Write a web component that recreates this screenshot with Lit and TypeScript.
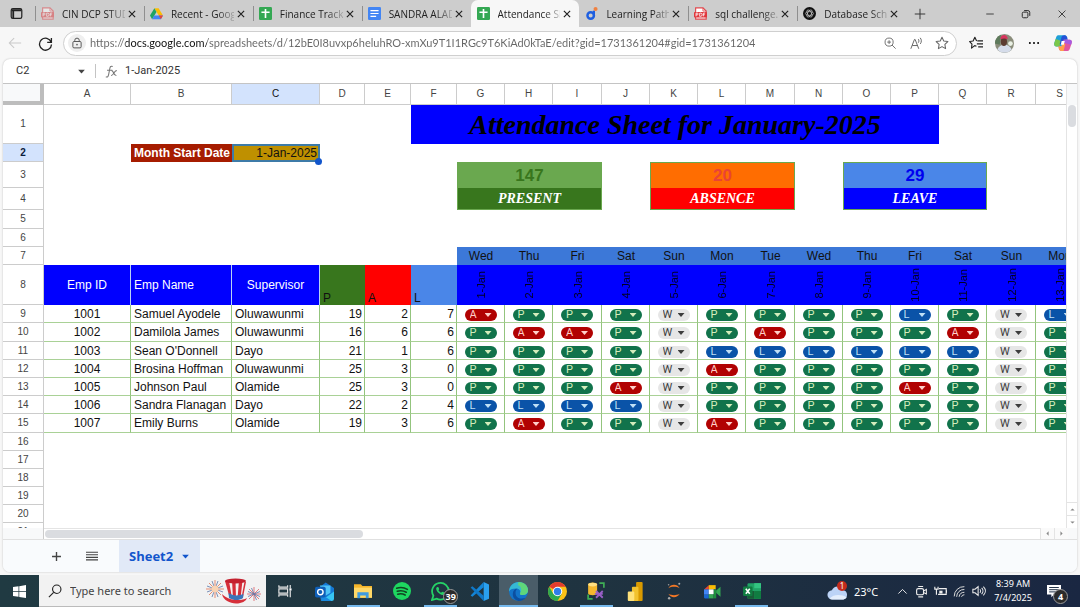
import { LitElement, html, svg, css, nothing, TemplateResult } from "lit";
import { customElement, property } from "lit/decorators.js";
import { classMap } from "lit/directives/class-map.js";

const pdf = svg`<path d="M2 1h9l4 4v10H2z" fill="#fff" stroke="#e0474c" stroke-width="1.4"/><path d="M11 1v4h4" fill="none" stroke="#e0474c"/><rect x="0" y="6" width="16" height="7" rx="1" fill="#e0373c"/><path d="M2.500 11.500v-4h1.500a1 1 0 0 1 0 2.200H2.500M7 7.500v4h1a1.800 1.800 0 0 0 0-4zM11.500 11.500v-4h2.200M11.500 9.500h1.800" fill="none" stroke="#fff" stroke-width="1"/>`;
const sheets = svg`<rect x="0" y="0" width="16" height="16" rx="1.500" fill="#34a853"/><path d="M8 2.500v11M3 6.500h10" stroke="#fff" stroke-width="2"/>`;

const ICONS: Record<string, TemplateResult> = {
  panes: svg`<rect x="1.500" y="2" width="13" height="12" rx="2" fill="none" stroke="#222" stroke-width="1.500"/><path d="M2 4h12M4 4v9.500" stroke="#222" stroke-width="2.200"/>`,
  pdf,
  drive: svg`<path d="M5.400 1.500h5.200L16 10.500h-5.200z" fill="#fbbc04"/><path d="M5.400 1.500 0 10.500l2.600 4.500L8 6z" fill="#1fa463"/><path d="M5.200 10.500H16L13.400 15H2.600z" fill="#4285f4"/><path d="m16 10.500-2.600 4.500-2.600-4.500z" fill="#ea4335"/>`,
  sheets,
  docs: svg`<rect width="16" height="16" rx="1.500" fill="#4285f4"/><path d="M3 4.500h10M3 8h10M3 11.500h7" stroke="#fff" stroke-width="1.500"/>`,
  path: svg`<circle cx="7" cy="10.500" r="4" fill="none" stroke="#1f5fe0" stroke-width="3"/><path d="M11 4.500v7" stroke="#1f5fe0" stroke-width="2.600"/><circle cx="13" cy="2.500" r="2.500" fill="#f08040"/>`,
  gpt: svg`<circle cx="8" cy="8" r="8" fill="#111"/><g fill="none" stroke="#ccc" stroke-width=".8"><ellipse cx="8" cy="8" rx="5" ry="2.400"/><ellipse cx="8" cy="8" rx="5" ry="2.400" transform="rotate(60 8 8)"/><ellipse cx="8" cy="8" rx="5" ry="2.400" transform="rotate(120 8 8)"/></g>`,
  close: svg`<path d="M3 3l10 10M13 3 3 13" stroke="#222" stroke-width="1.900"/>`,
  plus: svg`<path d="M8 1v14M1 8h14" stroke="#333" stroke-width="1.300"/>`,
  min: svg`<path d="M2 8h12" stroke="#222" stroke-width="1.300"/>`,
  max: svg`<rect x="2" y="5" width="9" height="9" rx="2" fill="none" stroke="#222" stroke-width="1.500"/><path d="M5 2.500h6a3 3 0 0 1 3 3V11" fill="none" stroke="#222" stroke-width="1.500"/>`,
  winclose: svg`<path d="M2.500 2.500l11 11M13.500 2.500l-11 11" stroke="#222" stroke-width="1.300"/>`,
  back: svg`<path d="M15 8H1.500M7 2.500 1.500 8 7 13.500" fill="none" stroke="#c9c9c9" stroke-width="1.200"/>`,
  reload: svg`<path d="M14 6.500A6.400 6.400 0 1 0 14.400 9M14.300 2v4.700H9.800" fill="none" stroke="#222" stroke-width="1.400"/>`,
  lock: svg`<rect x="2.500" y="6" width="11" height="8.500" rx="1.500" fill="none" stroke="#555" stroke-width="1.300"/><path d="M5 6V4.500a3 3 0 0 1 6 0V6" fill="none" stroke="#555" stroke-width="1.300"/><circle cx="8" cy="10.200" r="1.100" fill="#555"/>`,
  zoom: svg`<circle cx="6.800" cy="6.800" r="5.400" fill="none" stroke="#666" stroke-width="1.200"/><path d="M10.700 10.700 15.500 15.500M4.300 6.800h5M6.800 4.300v5" stroke="#666" stroke-width="1.200"/>`,
  read: svg`<path d="M1 14.500 5.500 3h.8l4.500 11.500M2.700 10.500h6.400M10 2.500c1.200 1 1.200 3.200.2 4.500M12.500 1c1.900 2 1.900 5.300.2 7.500" fill="none" stroke="#666" stroke-width="1.200"/>`,
  star: svg`<path d="m8 1.500 2 4.300 4.700.6-3.400 3.300.8 4.700L8 12.100l-4.100 2.300.8-4.700L1.300 6.400 6 5.800z" fill="none" stroke="#666" stroke-width="1.200" stroke-linejoin="round"/>`,
  favs: svg`<path d="M8.500 11.800 6.500 11l-3.600 2.800.5-4.600L.8 6.300l3.900-.6 2-4.200 2 4.200" fill="none" stroke="#222" stroke-width="1.300" stroke-linejoin="round"/><path d="M9.500 5.500H16M9 9h7M10.500 12.500H16" stroke="#222" stroke-width="1.300"/>`,
  avatar: svg`<circle cx="8" cy="8" r="8" fill="#8a8d7b"/><path d="M0 8a8 8 0 0 1 5-7.400L4 9z" fill="#5e7a5c"/><path d="M2 13a6.500 6.500 0 0 1 12 0 8 8 0 0 1-12 0z" fill="#d5dcea"/><ellipse cx="7.500" cy="6.500" rx="2.600" ry="3.500" fill="#5b3b30"/><path d="M4.500 4.500C4.500-.5 11-.5 10.700 4.500 9 3.500 6.500 3.500 4.500 4.500z" fill="#d8345f"/><circle cx="13" cy="8" r="2" fill="#e9f0e4"/>`,
  dots: svg`<circle cx="2.500" cy="8" r="1.300"/><circle cx="8" cy="8" r="1.300"/><circle cx="13.500" cy="8" r="1.300"/>`,
  copilot: svg`<path d="M4 1h5.500c1.300 0 1.800 1 2.200 2.200L9 9 5.500 11H2C.3 11-.1 9.500.3 8L2 2.700C2.400 1.500 3 1 4 1z" fill="#1fa0d8"/><path d="M.3 8 1.500 4.500 6 6l-1 5H2C.3 11-.1 9.500.3 8z" fill="#7cc84a"/><path d="M9.500 1c1.300 0 1.800 1 2.200 2.200l.6 1.800H9L8 9H5l1.600-6C7 1.600 7.600 1 9.500 1z" fill="#2451d8"/><path d="M12 15H6.500c-1.300 0-1.800-1-2.200-2.200L4 11h2.700L8.500 5H14c1.700 0 2.100 1.500 1.700 3L14 13.300c-.4 1.200-1 1.700-2 1.700z" fill="#e0559f"/><path d="M4 11h2.700l1-3.500L10 9l-1.500 6h-2c-1.300 0-1.800-1-2.200-2.200z" fill="#ffa14a"/><path d="M9 5h5c1.700 0 2.100 1.500 1.700 3l-.5 1.500L8 7.500z" fill="#a65be0"/><path d="M6.800 6.200h2.800L8.700 9.600H6z" fill="#fff"/>`,
  fx: svg`<path d="M1 14.500c2.500 1 3-.5 3.500-3L6 4c.4-2 1.300-3 3.500-2.300M2.500 6.500H9M8 7c2.500-.8 2.500 6.500 6 6M14.500 7c-3-1-4 6.500-7 5.800" fill="none" stroke="#777" stroke-width="1.300"/>`,
  caret: svg`<path d="M2 5h12l-6 6.500z" fill="#444"/>`,
  caretBlue: svg`<path d="M2 5h12l-6 6.500z" fill="#1155cc"/>`,
  add: svg`<path d="M8 1.500v13M1.500 8h13" stroke="#444" stroke-width="2"/>`,
  menu: svg`<path d="M0 3h16M0 6.400h16M0 9.800h16M0 13.200h16" stroke="#444" stroke-width="1.500"/>`,
  up: svg`<path d="M3 10.500h10L8 5.500z" fill="#888"/>`,
  down: svg`<path d="M3 5.500h10l-5 5z" fill="#888"/>`,
  left: svg`<path d="M10.500 3v10l-5-5z" fill="#888"/>`,
  right: svg`<path d="M5.500 3v10l5-5z" fill="#888"/>`,
  windows: svg`<path d="M0 2.500 6.800 1.500v6H0zM7.700 1.400 16 0v7.500H7.700zM0 8.400h6.800v6L0 13.500zM7.700 8.400H16V16l-8.300-1.300z" fill="#fff"/>`,
  search: svg`<circle cx="10" cy="6" r="4.800" fill="none" stroke="#222" stroke-width="1.300"/><path d="M6.500 9.500 1 15" stroke="#222" stroke-width="1.300"/>`,
  taskview: svg`<path d="M1 1.500v2h10v-2M1 14.500v-2h10v2M1 5.500h10v5H1zM14 1v4M14 7.500V15" fill="none" stroke="#e8e8e8" stroke-width="1.300"/><rect x="13" y="5" width="2.500" height="2.500" fill="#fff"/>`,
  outlook: svg`<path d="M3 5 9 .5 16 5v8.500a2 2 0 0 1-2 2H5z" fill="#1478d4"/><path d="M4 3h9v6l-5 3z" fill="#4fc3f7"/><path d="M16 5.500V14a2 2 0 0 1-2 2H5l11-8z" fill="#37c6f4"/><path d="M5 10l9 6H5.500z" fill="#1a8ae0"/><rect x="0" y="4" width="9" height="9" rx="1.500" fill="#0f5fb8"/><circle cx="4.500" cy="8.500" r="2.300" fill="none" stroke="#fff" stroke-width="1.200"/>`,
  folder: svg`<path d="M0 2h6l1.500 1.500H16V14H0z" fill="#f5b52a"/><path d="M0 5h16v9H0z" fill="#ffd867"/><path d="M3 9h10v5.500h-2.500V12h-5v2.500H3z" fill="#3f9be0"/>`,
  spotify: svg`<circle cx="8" cy="8" r="8" fill="#1ed760"/><path d="M3.300 5.500c3.200-1 6.800-.6 9.500 1M3.800 8.200c2.700-.8 5.600-.5 8 .9M4.200 10.800c2.200-.6 4.600-.4 6.600.8" fill="none" stroke="#142" stroke-width="1.400" stroke-linecap="round"/>`,
  whatsapp: svg`<path d="M.8 15.200 2 11.500A7 7 0 1 1 4.700 14z" fill="none" stroke="#25d366" stroke-width="1.500"/><path d="M5.300 4.300c1.200-.6 1.500 1.200 1.600 1.800-.9.900-.5 1.200.2 2s1.400 1.200 1.900.6 1-.6 1.500-.2 1.300.9.700 1.700c-1.200 1.500-3.400.5-5-1.100s-2.700-3.800-.9-4.800z" fill="#25d366"/>`,
  vscode: svg`<path d="M11.500 0 16 2v12l-4.500 2z" fill="#2aa0ee"/><path d="M11.500 0v4.500L2 12.500.5 11.300z" fill="#1485d6"/><path d="M11.500 16v-4.500L2 3.500.5 4.700z" fill="#0f78c8"/>`,
  edge: svg`<circle cx="8" cy="8" r="8" fill="#1374c9"/><path d="M0 7.500C.5 3 4 0 8 0c5 0 8 3.500 8 7 0 3-2.500 4-4.500 4S8.700 10 9.500 9C10 7.500 8.500 5.500 6 5.500S1 6 0 8z" fill="#36b8d4"/><path d="M8 0c5 0 8 3.500 8 7 0 3-2.500 4-4.500 4S8.700 10 9.500 9c1.500-2 1-5-2-6.500z" fill="#5fd67a"/><path d="M5.500 9c0 4 3.500 6 8.500 4.300A8 8 0 0 1 8 16C5 15.500 3 13 3.200 10S5 5.800 7 5.700C6 6.500 5.500 7.500 5.500 9z" fill="#0c4fa0"/>`,
  chrome: svg`<circle cx="8" cy="8" r="8" fill="#fbc116"/><path d="M8 8 1.100 4A8 8 0 0 1 14.900 4H8z" fill="#e33b2e"/><path d="M1.100 4A8 8 0 0 0 8 16l3.500-6L8 8 4.500 10z" fill="#2da94f"/><circle cx="8" cy="8" r="4" fill="#fff"/><circle cx="8" cy="8" r="3.100" fill="#2f7de9"/>`,
  ssms: svg`<path d="M1 2.200c0-2.400 8-2.400 8 0v8c0 2-8 2-8 0z" fill="#f5b82e"/><ellipse cx="5" cy="2.300" rx="4" ry="1.600" fill="#ffe083"/><path d="M11 1h4v4M1 11v4h4" fill="none" stroke="#3fae55" stroke-width="1.500"/><path d="m8 8 6 6M14 8l-6 6M7 10.500h7" stroke="#9a5fc8" stroke-width="1.600"/>`,
  powerbi: svg`<rect x="8.500" y="0" width="5.500" height="16" rx=".8" fill="#d99a00"/><rect x="5" y="4" width="5.500" height="12" rx=".8" fill="#f2c22e"/><rect x="1.500" y="8" width="5.500" height="8" rx=".8" fill="#ffe27a"/>`,
  jupyter: svg`<path d="M3 5.500c2-4 8-4 10 0-3-1.700-7-1.700-10 0zM3 10.500c2 4 8 4 10 0-3 1.700-7 1.700-10 0z" fill="#f37726"/><circle cx="12.700" cy="1.500" r=".9" fill="#aaa"/><circle cx="3.200" cy="2.500" r=".7" fill="#999"/><circle cx="3.700" cy="14.500" r="1.100" fill="#aaa"/>`,
  meet: svg`<path d="M0 6 4.500 2v4z" fill="#ea4335"/><path d="M4.500 2H11v4H4.500z" fill="#fbbc04"/><path d="M0 6h4.500v5H0z" fill="#4285f4"/><path d="M0 11h4.500v3.500H1.300A1.300 1.300 0 0 1 0 13z" fill="#1967d2"/><path d="M4.500 10.500H9v4H4.500z" fill="#34a853"/><path d="M9 6h2.500v8.500H9z" fill="#1e8e3e"/><path d="m11.500 7 4-3.500v9.500l-4-3.500z" fill="#34a853"/><rect x="4.500" y="6" width="4.500" height="4.500" fill="#fff"/>`,
  excel: svg`<rect x="4" y="1" width="12" height="14" rx="1" fill="#21a366"/><path d="M10 1h6v4.500h-6z" fill="#33c481"/><path d="M10 8h6v7h-6z" fill="#107c41"/><path d="M4 8h6v7H4z" fill="#185c37"/><rect x="0" y="4" width="8.500" height="8.500" rx="1" fill="#107c41"/><path d="m2.500 6 3.500 4.500M6 6l-3.500 4.500" stroke="#fff" stroke-width="1.400"/>`,
  cloud: svg`<path d="M4 14a3.500 3.500 0 0 1-.3-7A4.800 4.800 0 0 1 12.500 7 3.600 3.600 0 0 1 12.500 14z" fill="#bcd3f6"/><path d="M2 13.300C5 10 11 10 15 12.500a3.500 3.500 0 0 1-2.500 1.500H4a3.500 3.500 0 0 1-2-.7z" fill="#e4eefc"/>`,
  chevron: svg`<path d="m2 11 6-6 6 6" fill="none" stroke="#eee" stroke-width="1.400"/>`,
  meetnow: svg`<rect x="2" y="4.500" width="8.500" height="7.500" rx="2" fill="none" stroke="#eee" stroke-width="1.400"/><path d="M11 7l3-1.500V11l-3-1.500M4 1.800h6M4 14.600h6" fill="none" stroke="#eee" stroke-width="1.300"/>`,
  battery: svg`<path d="M6 4.500h9v7H5M15.500 6.500v3" fill="none" stroke="#eee" stroke-width="1.400"/><path d="M6.500 7h4v3.500h-4z" fill="#eee"/><path d="M1 2v3h4V2M3 5v7" fill="none" stroke="#eee" stroke-width="1.400"/>`,
  wifi: svg`<path d="M1.500 14A12 12 0 0 1 14 2M4.500 14.500A9 9 0 0 1 14 5.500M7.500 14.500A6.500 6.500 0 0 1 14 9M10.500 14.500A3.500 3.500 0 0 1 14 12" fill="none" stroke="#ddd" stroke-width="1.200"/>`,
  volume: svg`<path d="M1 6h2.500L7 3v10L3.500 10H1z" fill="none" stroke="#eee" stroke-width="1.200"/><path d="M9 6c1 1 1 3 0 4M11 4.500c2 2 2 5 0 7M13 3c3 3 3 7 0 10" fill="none" stroke="#eee" stroke-width="1.200"/>`,
  notes: svg`<path d="M0 1h16v11H8l-3 3v-3H0z" fill="#fff"/><path d="M2.500 4h11M2.500 6.500h11M2.500 9h8" stroke="#1b2c42" stroke-width="1.100"/>`,
};

const icon = (name: string, size: number) =>
  html`<svg width=${size} height=${size} viewBox="0 0 16 16" aria-hidden="true">${ICONS[name]}</svg>`;

/* ---------- Browser frame ---------- */

const TABS = [
  { icon: "pdf", title: "CIN DCP STUD", faded: true },
  { icon: "drive", title: "Recent - Goog" },
  { icon: "sheets", title: "Finance Tracke" },
  { icon: "docs", title: "SANDRA ALAD" },
  { icon: "sheets", title: "Attendance Sh", active: true },
  { icon: "path", title: "Learning Path", plain: true },
  { icon: "pdf", title: "sql challenge.p" },
  { icon: "gpt", title: "Database Sche" },
];

@customElement("browser-bar")
export class BrowserBar extends LitElement {
  static styles = css`
    :host { display: block; font-family: "Open Sans", sans-serif; color: #222; }
    svg { display: block; flex: none; }
    button { border: 0; padding: 0; background: none; display: grid; place-items: center; flex: none; }
    .strip { display: flex; align-items: center; height: 27px; background: #cdcdcd; }
    .panes { width: 32px; margin-right: 3px; }
    .tabs { display: flex; flex: 1; min-width: 0; height: 100%; }
    .tab { flex: 1 1 0; min-width: 0; display: flex; align-items: center; padding: 0 5px 0 6px; position: relative; }
    .tab::before { content: ""; position: absolute; left: 0; top: 6px; width: 1px; height: 15px; background: #8f8f8f; }
    .tab.active { background: #f7f7f7; border-radius: 7px 7px 0 0; }
    .tab.active::before, .tab.plain::before { display: none; }
    .title { flex: 1; min-width: 0; margin-left: 8px; font-size: 10px; line-height: 16px; white-space: nowrap; color: #222; text-decoration: none;
      mask-image: linear-gradient(to right, #000 74%, #0004 98%); }
    .faded > svg { opacity: 0.5; }
    .close { width: 14px; height: 18px; }
    .add { width: 28px; height: 27px; }
    .window { display: flex; margin-left: 38px; }
    .window button { width: 36px; height: 27px; }
    .toolbar { display: flex; align-items: center; height: 32px; padding-right: 3px; background: #f7f7f7; }
    .nav { width: 30px; height: 28px; }
    .address { flex: 1; min-width: 0; display: flex; align-items: center; height: 25px; margin: 0 4px 0 3px; padding: 0 1px 0 4px; box-sizing: border-box; background: #fff; border: 1px solid #cfcfcf; border-radius: 13px; }
    .lock { width: 18px; height: 18px; border-radius: 9px; background: #efefef; }
    .url { flex: 1; min-width: 0; height: 20px; margin-left: 4px; padding: 0; border: 0; outline: 0; font: 11px/20px Lato, "Open Sans", sans-serif; color: transparent; caret-color: #222;
      background: linear-gradient(to right, #666 36px, #111 36px 117px, #666 117px); background-clip: text; -webkit-background-clip: text; }
    .tool { width: 26px; height: 24px; }
    .wide { width: 29px; height: 28px; }
  `;
  render() {
    return html`
      <div class="strip">
        <button class="panes" aria-label="Tab actions">${icon("panes", 13)}</button>
        <nav class="tabs">
          ${TABS.map((t) => html`
            <div class=${classMap({ tab: true, active: !!t.active, plain: !!t.plain, faded: !!t.faded })}>
              ${icon(t.icon, 13)}
              <a class="title" href="#">${t.title}</a>
              <button class="close" aria-label="Close tab">${icon("close", 10)}</button>
            </div>`)}
        </nav>
        <button class="add" aria-label="New tab">${icon("plus", 12)}</button>
        <div class="window">
          <button aria-label="Minimize">${icon("min", 10)}</button>
          <button aria-label="Restore">${icon("max", 10)}</button>
          <button aria-label="Close">${icon("winclose", 10)}</button>
        </div>
      </div>
      <div class="toolbar">
        <button class="nav" aria-label="Back">${icon("back", 14)}</button>
        <button class="nav" aria-label="Reload">${icon("reload", 15)}</button>
        <div class="address">
          <button class="lock" aria-label="Site information">${icon("lock", 12)}</button>
          <input class="url" aria-label="Address" spellcheck="false"
            .value=${"https://docs.google.com/spreadsheets/d/12bE0I8uvxp6heluhRO-xmXu9T1I1RGc9T6KiAd0kTaE/edit?gid=1731361204#gid=1731361204"} />
          <button class="tool" aria-label="Zoom">${icon("zoom", 12)}</button>
          <button class="tool" aria-label="Read aloud">${icon("read", 13)}</button>
          <button class="tool" aria-label="Add to favorites">${icon("star", 14)}</button>
        </div>
        <button class="wide" aria-label="Favorites">${icon("favs", 14)}</button>
        <button class="wide" aria-label="Profile">${icon("avatar", 19)}</button>
        <button class="wide" aria-label="Settings">${icon("dots", 12)}</button>
        <button class="wide" aria-label="Copilot">${icon("copilot", 18)}</button>
      </div>`;
  }
}

/* ---------- Spreadsheet ---------- */

const COLUMNS = "ABCDEFGHIJKLMNOPQRS".split("");
const WIDTHS = [41, 87, 101, 88, 45, 46, 46, 48, 48, 49, 48, 48, 48, 49, 48, 48, 48, 48, 49, 48];
const DAYS = ["Wed", "Thu", "Fri", "Sat", "Sun", "Mon", "Tue", "Wed", "Thu", "Fri", "Sat", "Sun", "Mon"];
const STATES = ["P", "A", "L", "W"];
const STAFF: [number, string, string, number, number, number, string][] = [
  [1001, "Samuel Ayodele", "Oluwawunmi", 19, 2, 7, "APPPWPPPPLPWL"],
  [1002, "Damilola James", "Oluwawunmi", 16, 6, 6, "PAAPWPAPPPAWP"],
  [1003, "Sean O'Donnell", "Dayo", 21, 1, 6, "PPPPWLLLLLLWP"],
  [1004, "Brosina Hoffman", "Oluwawunmi", 25, 3, 0, "PPPPWAPPPPPWP"],
  [1005, "Johnson Paul", "Olamide", 25, 3, 0, "PPPAWPPPPAPWP"],
  [1006, "Sandra Flanagan", "Dayo", 22, 2, 4, "LLLLWPPPPPPWP"],
  [1007, "Emily Burns", "Olamide", 19, 3, 6, "PAPPWAPPPPPWP"],
];
const TALL_ROWS = [10, 15];

@customElement("status-chip")
export class StatusChip extends LitElement {
  @property() value = "P";
  static styles = css`
    :host { display: block; }
    .chip { display: grid; width: 32px; height: 12px; margin: 0 auto; border-radius: 6px; align-items: center; }
    .pick { grid-area: 1 / 1; appearance: none; width: 32px; height: 12px; border: 0; margin: 0; padding: 0 0 0 5px; background: none; color: inherit; font: 11px/12px Roboto, sans-serif; }
    .mark { grid-area: 1 / 1; justify-self: end; margin-right: 5px; width: 7px; height: 4px; background: currentColor; clip-path: polygon(0 0, 100% 0, 50% 100%); pointer-events: none; }
    .P { background: #11734b; color: #d4edbc; }
    .A { background: #b10202; color: #ffcfc9; }
    .L { background: #0a53a8; color: #bfe0f6; }
    .W { background: #e6e6e6; color: #3d3d3d; }
  `;
  render() {
    return html`<span class="chip ${this.value}">
      <select class="pick" aria-label="Status">
        ${STATES.map((s) => html`<option ?selected=${s === this.value}>${s}</option>`)}
      </select><span class="mark"></span></span>`;
  }
}

@customElement("sheet-view")
export class SheetView extends LitElement {
  static styles = css`
    :host { display: flex; flex-direction: column; min-height: 0; box-sizing: border-box; background: #fff; border-radius: 7px; overflow: hidden; font-family: "Liberation Sans", sans-serif; box-shadow: 0 0 2px #bbb; }
    svg { display: block; }
    button { border: 0; padding: 0; background: none; display: grid; place-items: center; }
    input { border: 0; outline: 0; padding: 0; background: none; color: #333; }
    .formula { display: flex; align-items: center; height: 24px; flex: none; border-bottom: 1px solid #c4c4c4; }
    .name { width: 52px; margin-left: 13px; font: 11px/20px Roboto, sans-serif; }
    .drop { width: 26px; height: 20px; }
    .rule { width: 1px; height: 14px; margin: 0 9px 0 1px; background: #c4c4c4; }
    .value { flex: 1; margin-left: 7px; font: 11px/20px Roboto, sans-serif; }
    .middle { flex: 1; min-height: 0; display: flex; }
    .viewport { flex: 1; min-width: 0; overflow: hidden; border-right: 1px solid #e4e4e4; }
    table { table-layout: fixed; width: 0; border-spacing: 0; font-size: 12px; line-height: 14px; color: #111; }
    tr { height: 18px; }
    .tall { height: 19px; }
    .cols { height: 21px; }
    .r1 { height: 39px; }
    .r3 { height: 26px; }
    .r4 { height: 22px; }
    .r5 { height: 19px; }
    .r8 { height: 40px; }
    td, th { box-sizing: border-box; padding: 0 3px; white-space: nowrap; overflow: hidden; }
    th { font-weight: 400; font-size: 10px; line-height: 12px; color: #444; border-right: 1px solid #ccc; border-bottom: 1px solid #ccc; padding: 0; }
    .corner { background: #f8f9fa; border-right: 4px solid #bdbdbd; border-bottom: 4px solid #bdbdbd; }
    .cols .sel { background: #d3e3fd; color: #111; }
    .r2 .sel { background: #d3e3fd; color: #0b1c3c; font-weight: 700; }
    .heading { background: #00f; color: #000; text-align: center; font: 700 italic 28px/36px "Liberation Serif", serif; }
    .start { background: #a61c00; color: #fff; font-weight: 700; }
    .date { background: #bf9000; text-align: right; padding: 0 1px; border: 2px solid #3d7ba8; position: relative; overflow: visible; }
    .date::after { content: ""; position: absolute; right: -4px; bottom: -5px; width: 7px; height: 7px; border-radius: 4px; background: #1155cc; }
    .count, .label { text-align: center; border: 1px solid #6aa84f; }
    .count { font-size: 17px; line-height: 20px; font-weight: 700; border-bottom: 0; }
    .label { color: #fff; font: 700 italic 14px/18px "Liberation Serif", serif; border-top: 0; }
    .c-present { background: #6aa84f; color: #38761d; }
    .l-present { background: #38761d; }
    .c-absent { background: #ff6d01; color: #ea4335; }
    .l-absent { background: #f00; }
    .c-leave { background: #4a86e8; color: #0000f0; }
    .l-leave { background: #00f; }
    .day { background: #3c78d8; text-align: center; }
    .head { background: #00f; color: #fff; text-align: center; border-right: 1px solid #b9d3f5; }
    .start-side { text-align: left; }
    .tot { vertical-align: bottom; text-align: left; }
    .t-p { background: #38761d; }
    .t-a { background: #f00; }
    .t-l { background: #4a86e8; }
    .when { background: #00f; padding: 0; font-size: 11px; color: #000024; }
    .turn { display: block; width: 14px; margin: 0 auto; text-align: center; writing-mode: vertical-rl; transform: rotate(180deg); }
    .data td { border-right: 1px solid #93c47d; border-bottom: 1px solid #a9d196; }
    .mid { text-align: center; }
    .num { text-align: right; padding: 0 2px; }
    .data .pickcell { padding: 4px 0 0; line-height: 0; vertical-align: top; }
    .vbar { width: 10px; flex: none; display: flex; flex-direction: column; box-sizing: border-box; background: #fff; }
    .vtrack { flex: 1; border-top: 21px solid #f8f9fa; }
    .vthumb { width: 8px; height: 22px; margin: 0 1px; border-radius: 4px; background: #dadce0; }
    .vbar button { height: 13px; border-top: 1px solid #e4e4e4; }
    .hbar { flex: none; display: flex; height: 11px; border-bottom: 1px solid #e0e0e0; }
    .stub { width: 40px; background: #f8f9fa; border-right: 1px solid #ccc; }
    .htrack { flex: 1; padding: 1px; border-top: 1px solid #e4e4e4; }
    .hthumb { width: 32%; height: 8px; border-radius: 4px; background: #dadce0; }
    .hbar button { width: 14px; border-left: 1px solid #e4e4e4; background: #fafafa; }
    .end { width: 9px; background: #f8f9fa; }
    .foot { flex: none; display: flex; height: 32px; background: #f9fbfd; padding-left: 36px; }
    .foot button { width: 35px; height: 32px; }
    .foot .sheet { width: auto; display: flex; align-items: center; gap: 8px; margin-left: 10px; padding: 0 10px; background: #e1e9f7; color: #1155cc; font: 700 13px/16px "Open Sans", sans-serif; }
  `;

  private blank(n: number) {
    return html`<td colspan=${n}></td>`;
  }
  private cards(kind: "count" | "label", present: string, absent: string, leave: string) {
    const k = kind === "count" ? "c" : "l";
    return html`${this.blank(6)}<td colspan="3" class="${kind} ${k}-present">${present}</td>${this.blank(1)}
      <td colspan="3" class="${kind} ${k}-absent">${absent}</td>${this.blank(1)}
      <td colspan="3" class="${kind} ${k}-leave">${leave}</td>${this.blank(2)}`;
  }
  render() {
    return html`
      <div class="formula">
        <input class="name" aria-label="Name box" .value=${"C2"} />
        <button class="drop" aria-label="Named ranges">${icon("caret", 9)}</button>
        <span class="rule"></span>
        ${icon("fx", 13)}
        <input class="value" aria-label="Formula" .value=${"1-Jan-2025"} />
      </div>
      <div class="middle">
        <div class="viewport">
          <table>
            <colgroup>${WIDTHS.map((w) => html`<col style="width:${w}px" />`)}</colgroup>
            <tr class="cols"><th class="corner"></th>${COLUMNS.map((c) => html`<th class=${c === "C" ? "sel" : ""}>${c}</th>`)}</tr>
            <tr class="r1"><th>1</th>${this.blank(5)}<td class="heading" colspan="11">Attendance Sheet for January-2025</td>${this.blank(3)}</tr>
            <tr class="r2"><th class="sel">2</th>${this.blank(1)}<td class="start">Month Start Date</td><td class="date">1-Jan-2025</td>${this.blank(16)}</tr>
            <tr class="r3"><th>3</th>${this.cards("count", "147", "20", "29")}</tr>
            <tr class="r4"><th>4</th>${this.cards("label", "PRESENT", "ABSENCE", "LEAVE")}</tr>
            <tr class="r5"><th>5</th>${this.blank(19)}</tr>
            <tr><th>6</th>${this.blank(19)}</tr>
            <tr><th>7</th>${this.blank(6)}${DAYS.map((d) => html`<td class="day">${d}</td>`)}</tr>
            <tr class="r8"><th>8</th>
              <td class="head">Emp ID</td><td class="head start-side">Emp Name</td><td class="head">Supervisor</td>
              <td class="tot t-p">P</td><td class="tot t-a">A</td><td class="tot t-l">L</td>
              ${DAYS.map((_, i) => html`<td class="when"><span class="turn">${i + 1}-Jan</span></td>`)}
            </tr>
            ${STAFF.map(([id, name, boss, p, a, l, marks], i) => html`
              <tr class=${classMap({ data: true, tall: TALL_ROWS.includes(i + 9) })}><th>${i + 9}</th>
                <td class="mid">${id}</td><td>${name}</td><td>${boss}</td>
                <td class="num">${p}</td><td class="num">${a}</td><td class="num">${l}</td>
                ${marks.split("").map((m) => html`<td class="pickcell"><status-chip value=${m}></status-chip></td>`)}
              </tr>`)}
            ${[16, 17, 18, 19, 20, 21].map((n) => html`<tr><th>${n}</th>${this.blank(19)}</tr>`)}
          </table>
        </div>
        <div class="vbar">
          <div class="vtrack"><div class="vthumb"></div></div>
          <button aria-label="Scroll up">${icon("up", 7)}</button>
          <button aria-label="Scroll down">${icon("down", 7)}</button>
        </div>
      </div>
      <div class="hbar">
        <div class="stub"></div>
        <div class="htrack"><div class="hthumb"></div></div>
        <button aria-label="Scroll left">${icon("left", 7)}</button>
        <button aria-label="Scroll right">${icon("right", 7)}</button>
        <div class="end"></div>
      </div>
      <div class="foot">
        <button aria-label="Add sheet">${icon("add", 11)}</button>
        <button aria-label="All sheets">${icon("menu", 12)}</button>
        <button class="sheet">Sheet2 ${icon("caretBlue", 9)}</button>
      </div>`;
  }
}

/* ---------- Desktop taskbar ---------- */

const APPS: { icon: string; label: string; size: number; open?: boolean; active?: boolean; badge?: string }[] = [
  { icon: "taskview", label: "Task View", size: 14 },
  { icon: "outlook", label: "Outlook", size: 19 },
  { icon: "folder", label: "File Explorer", size: 18, open: true },
  { icon: "spotify", label: "Spotify", size: 18 },
  { icon: "whatsapp", label: "WhatsApp", size: 19, open: true, badge: "39" },
  { icon: "vscode", label: "Visual Studio Code", size: 19 },
  { icon: "edge", label: "Edge", size: 19, open: true, active: true },
  { icon: "chrome", label: "Chrome", size: 19 },
  { icon: "ssms", label: "SQL Server Management Studio", size: 18, open: true },
  { icon: "powerbi", label: "Power BI", size: 19 },
  { icon: "jupyter", label: "Jupyter", size: 18 },
  { icon: "meet", label: "Meet", size: 17 },
  { icon: "excel", label: "Excel", size: 18, open: true },
];

@customElement("task-bar")
export class TaskBar extends LitElement {
  static styles = css`
    :host { display: flex; height: 32px; background: linear-gradient(to right, #203a42, #1f3340 55%, #1a2742); font-family: "Noto Sans", sans-serif; color: #fff; }
    svg { display: block; }
    button { border: 0; padding: 0; background: none; color: inherit; font: inherit; display: grid; place-items: center; }
    .start { width: 39px; }
    .search { display: flex; align-items: center; width: 227px; box-sizing: border-box; padding: 0 4px 0 9px; background: #f2f2f2; border-bottom: 1px solid #bbb; }
    .query { flex: 1; min-width: 0; margin-left: 8px; padding: 0; border: 0; outline: 0; background: none; font: 11px/20px "Noto Sans", sans-serif; }
    .query::placeholder { color: #444; }
    .apps { flex: 1; min-width: 0; display: flex; }
    .app { flex: 1 1 0; min-width: 0; position: relative; }
    .open::after { content: ""; position: absolute; left: 3px; right: 3px; bottom: 0; height: 2px; background: #76b9ed; }
    .active { background: #4a5d69; }
    .active::after { left: 0; right: 0; }
    .badge { position: absolute; right: 2px; bottom: 3px; min-width: 13px; height: 13px; border: 1px solid #999; border-radius: 8px; background: #2b2b2b; font-size: 9px; line-height: 13px; font-weight: 700; text-align: center; }
    .tray { display: flex; align-items: center; width: 309px; flex: none; box-sizing: border-box; padding-left: 56px; font-size: 11px; }
    .weather { display: flex; align-items: center; gap: 6px; position: relative; width: 66px; height: 32px; }
    .alert { position: absolute; left: 10px; top: 6px; width: 10px; height: 10px; border-radius: 5px; background: #c42b1c; font-size: 8px; line-height: 10px; text-align: center; }
    .tiny { width: 19px; height: 32px; }
    .clock { width: 50px; font-size: 9px; line-height: 14px; text-align: center; }
    .note { width: 28px; height: 32px; position: relative; margin-left: 2px; }
    .note .badge { right: 0; }
  `;
  render() {
    return html`
      <button class="start" aria-label="Start">${icon("windows", 13)}</button>
      <label class="search">
        ${icon("search", 14)}
        <input class="query" aria-label="Search" placeholder="Type here to search" />
        <svg width="56" height="26" viewBox="0 0 56 26" aria-hidden="true">
          <g stroke-width="1" stroke="#e58b70"><path d="M9 2v18M0 11h18M3 5l12 12M15 5 3 17"/></g>
          <g stroke-width=".8" stroke="#5b76a8"><path d="M6 3l6 16M1 8l16 6M1 14l16-6M6 19l6-16"/></g>
          <circle cx="9" cy="11" r="3.500" fill="#f8d3b4"/>
          <g stroke-width="1" stroke="#e07b80"><path d="M48 9v14M41 16h14M43 11l10 10M53 11 43 21"/></g>
          <g stroke-width=".8" stroke="#5b76a8"><path d="M45.500 10l5 12M42 13.500l12 5M42 18.500l12-5"/></g>
          <path d="M19 3c6-3 15-2 21 1l-3 15c-4 3-9 2-13 0z" fill="#f4f0f0"/>
          <path d="M19 3h4l3 17-2.500-1zM26 2h3.500l.5 19h-3zM33 2l3.500.5-2 18-3 .5zM38.500 3.500l1.500.5-3 15-1.500.5z" fill="#d62f3a"/>
          <ellipse cx="29.500" cy="3" rx="10.500" ry="2.400" fill="#c4212f"/>
          <path d="M22.500 15c4 3 10 3 15 1l-.5 4c-4 3-10 2.500-14 0z" fill="#3c74b8"/>
          <path d="M16 16c5 6 18 8 25 4-1 3-5 5.500-11 5.500S17 22 16 16z" fill="#d62f3a"/>
        </svg>
      </label>
      <div class="apps">
        ${APPS.map((a) => html`<button class=${classMap({ app: true, open: !!a.open, active: !!a.active })} aria-label=${a.label}>
          ${icon(a.icon, a.size)}${a.badge ? html`<span class="badge">${a.badge}</span>` : nothing}</button>`)}
      </div>
      <div class="tray">
        <div class="weather">${icon("cloud", 21)}<span class="alert">1</span><span>23°C</span></div>
        <button class="tiny" aria-label="Hidden icons">${icon("chevron", 11)}</button>
        <button class="tiny" aria-label="Meet now">${icon("meetnow", 13)}</button>
        <button class="tiny" aria-label="Battery">${icon("battery", 13)}</button>
        <button class="tiny" aria-label="Network">${icon("wifi", 13)}</button>
        <button class="tiny" aria-label="Volume">${icon("volume", 14)}</button>
        <div class="clock">8:39 AM<br />7/4/2025</div>
        <button class="note" aria-label="Notifications">${icon("notes", 14)}<span class="badge">4</span></button>
      </div>`;
  }
}

@customElement("app-root")
export class AppRoot extends LitElement {
  static styles = css`
    :host { display: flex; flex-direction: column; height: 100vh; overflow: hidden; background: #f7f7f7; }
    .page { flex: 1; margin: 0 3px 3px; }
  `;
  render() {
    return html`<browser-bar></browser-bar><sheet-view class="page"></sheet-view><task-bar></task-bar>`;
  }
}
